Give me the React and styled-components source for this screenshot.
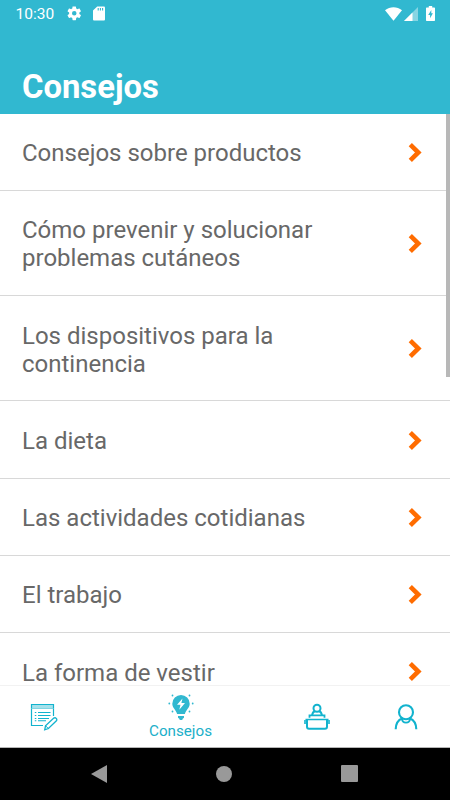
/**
 * External dependencies
 */
import styled, { createGlobalStyle, css } from 'styled-components';

const TEAL = '#31b8d0';
const TEAL_STROKE = '#12b3ce';
const ORANGE = '#ff6c00';

const GlobalStyle = createGlobalStyle`
  *, *::before, *::after {
    box-sizing: border-box;
  }

  body {
    margin: 0;
    font-family: Roboto, 'Liberation Sans', sans-serif;
    background-color: #fff;
  }
`;

const Screen = styled.div`
  position: relative;
  display: flex;
  flex-direction: column;
  width: 450px;
  height: 800px;
  overflow: hidden;
`;

const Header = styled.header`
  display: flex;
  flex-direction: column;
  flex: none;
  height: 113.5px;
  background-color: ${TEAL};
  color: #fff;
`;

const StatusBar = styled.div`
  display: flex;
  align-items: center;
  height: 27px;
  padding: 0 15.5px;
`;

const Clock = styled.span`
  width: 50.5px;
  padding-top: 1px;
  font-size: 15.5px;
  line-height: 27px;
`;

const StatusGroup = styled.div`
  display: flex;
  align-items: center;
  gap: ${({ $gap }) => $gap}px;
  ${({ $end }) =>
    $end &&
    css`
      margin-left: auto;
    `}
`;

const Title = styled.h1`
  margin: 41px 0 0 22px;
  font-size: 32.8px;
  line-height: 38px;
  font-weight: 700;
`;

const List = styled.ul`
  position: relative;
  flex: 1;
  min-height: 0;
  margin: 0;
  padding: 0;
  overflow: hidden;
  list-style: none;
`;

const Row = styled.li`
  display: flex;
  align-items: center;
  justify-content: space-between;
  padding: 25px 27px 23.05px 22px;
  border-bottom: 1px solid #d8d8d8;
`;

const Label = styled.span`
  width: 330px;
  padding-top: 0.5px;
  margin-bottom: -0.5px;
  font-size: 24px;
  line-height: 28.15px;
  color: #686868;
`;

const ScrollThumb = styled.div`
  position: absolute;
  top: 0;
  right: 0;
  width: 4.5px;
  height: 263px;
  background-color: #b8b8b8;
`;

const TabBar = styled.nav`
  display: flex;
  flex: none;
  height: 62.5px;
  border-top: 1px solid #f2f2f2;
  border-bottom: 1px solid #b5b5b5;
  background-color: #fff;
`;

const Tab = styled.div`
  display: flex;
  flex-direction: column;
  align-items: center;
  justify-content: center;
  width: ${({ $width }) => $width}px;
  padding-top: 1px;
  color: ${TEAL_STROKE};

  svg {
    flex: none;
  }
`;

const TabLabel = styled.span`
  padding-top: 1px;
  font-size: 15.2px;
  line-height: 18px;
  color: #20afc9;
`;

const SystemBar = styled.div`
  display: flex;
  align-items: center;
  justify-content: space-between;
  flex: none;
  height: 52.5px;
  padding: 0 92px 0 91px;
  background-color: #000;
`;

function GearIcon() {
  return (
    <svg width="16.5" height="16.5" viewBox="0 0 24 24" fill="#fff">
      <path d="M19.4 13a7.500 7.500 0 0 0 0-2l2.100-1.650c.2-.15.25-.42.12-.64l-2-3.460a.5.5 0 0 0-.6-.22l-2.500 1a7.300 7.300 0 0 0-1.700-.98l-.38-2.650A.49.49 0 0 0 14 2h-4a.49.49 0 0 0-.49.42l-.38 2.650c-.6.250-1.170.590-1.690.980l-2.490-1a.5.5 0 0 0-.61.22l-2 3.460c-.13.220-.07.490.12.640L4.570 11a7.900 7.900 0 0 0 0 2l-2.110 1.650a.5.5 0 0 0-.12.640l2 3.460c.12.220.39.300.61.220l2.490-1c.52.400 1.080.730 1.690.980l.38 2.650c.03.240.240.400.490.400h4c.25 0 .46-.18.490-.42l.38-2.650a7.700 7.700 0 0 0 1.690-.98l2.490 1c.23.090.490 0 .61-.22l2-3.460a.5.5 0 0 0-.12-.640zM12 15.300a3.300 3.300 0 1 1 0-6.600 3.300 3.300 0 0 1 0 6.600z" />
    </svg>
  );
}

function SdCardIcon() {
  return (
    <svg width="12" height="15" viewBox="0 0 12 15">
      <path d="M4.200.5H11a1 1 0 0 1 1 1v12a1 1 0 0 1-1 1H1a1 1 0 0 1-1-1v-9z" fill="#fff" />
      <path d="M5.200 2v2.500M7.400 2v2.500M9.600 2v2.500" stroke={TEAL} strokeWidth="1.100" />
    </svg>
  );
}

function WifiIcon() {
  return (
    <svg width="17" height="14" viewBox="0 0 17 14">
      <path d="M0 3.300C5-.7 12-.7 17 3.300L8.500 13.800z" fill="#fff" />
    </svg>
  );
}

function SignalIcon() {
  return (
    <svg width="14" height="14" viewBox="0 0 14 14">
      <path d="M0 14 14 0v14z" fill="#86d5e3" />
      <path d="M0 14 8.500 5.500V14z" fill="#fff" />
    </svg>
  );
}

function BatteryIcon() {
  return (
    <svg width="9" height="15" viewBox="0 0 9 15">
      <path d="M2.800 0h3.400v1.500H8.300a.7.7 0 0 1 .7.7v12.100a.7.7 0 0 1-.7.700H.7a.7.7 0 0 1-.7-.7V2.200a.7.7 0 0 1 .7-.7h2.100z" fill="#fff" />
      <path d="M5.300 4 2.200 8.900h1.900v3.300l2.800-4.900H5.300z" fill={TEAL} />
    </svg>
  );
}

function ChevronIcon() {
  return (
    <svg width="16" height="22" viewBox="0 0 16 22">
      <path
        d="m3.300 2.700 8 7.800-8 7.800"
        fill="none"
        stroke={ORANGE}
        strokeWidth="4.600"
      />
    </svg>
  );
}

function DiaryIcon() {
  return (
    <svg width="28" height="28" viewBox="0 0 28 28" fill="none" stroke="currentColor">
      <path d="M1.500 3.500h22" stroke="#a5e1eb" strokeWidth="4" />
      <path d="M23.500 13V1.500h-22v21H13" strokeWidth="1.200" />
      <path d="M1.500 5.500h22" stroke="#7fd5e3" strokeWidth="1" />
      <path d="M8 9.500h12.500M8 12.500h12.500M8 15.500h11M8 17.800h8" strokeWidth="1.100" />
      <path d="M4.800 9.500h1.500M4.800 12.500h1.500M4.800 15.500h1.500M4.800 17.800h1.500" strokeWidth="1.100" />
      <path d="m14.700 26.800.8-4 8.300-7.700c1.800-1.200 3.800 1 2.600 2.700l-8 7.700z" strokeWidth="1.300" />
      <path d="m15.500 22.800 2.900 2.700" strokeWidth="1" />
    </svg>
  );
}

function BulbIcon() {
  return (
    <svg width="26" height="27" viewBox="0 0 26 27" fill={TEAL}>
      <path d="M13 1a8.700 8.700 0 0 1 8.700 8.700c0 4.300-3.700 5.900-4.800 10.300H9.100C8 15.600 4.300 14 4.300 9.700A8.700 8.700 0 0 1 13 1z" />
      <path d="M10 22h6v1.700l-1.300 1-.5 1.300h-2.400l-.5-1.300-1.300-1z" />
      <path d="M14.500 4.500 9 10.700h3.500l-1.200 5 5.700-6.600h-3.600z" fill="#fff" />
      <circle cx="4.500" cy="1.500" r=".9" />
      <circle cx="21.500" cy="1.500" r=".9" />
      <circle cx="1.300" cy="9.500" r=".9" />
      <circle cx="24.700" cy="9.500" r=".9" />
      <circle cx="4.500" cy="17.500" r=".9" />
      <circle cx="21.500" cy="17.500" r=".9" />
    </svg>
  );
}

function DeskIcon() {
  return (
    <svg width="26" height="28" viewBox="0 0 26 28" fill="none" stroke="currentColor" strokeWidth="2">
      <circle cx="13" cy="5.200" r="3.500" />
      <path d="M8.200 12c.2-2 1.400-3.500 2.800-4M17.800 12c-.2-2-1.400-3.500-2.800-4" />
      <path d="M5.500 14.700v-2.400h15v2.400" strokeWidth="1.800" />
      <path d="M1.500 16.500h23M1 17v4M25 17v4" strokeWidth="1.600" />
      <path d="M3 16.500v7.200q0 2 2 2h16q2 0 2-2v-7.200" />
    </svg>
  );
}

function ProfileIcon() {
  return (
    <svg width="24" height="28" viewBox="0 0 24 28" fill="none" stroke="currentColor" strokeWidth="2.100">
      <circle cx="12" cy="9.200" r="7" />
      <path d="M1.700 26.200c.2-5.200 2.800-9.300 6.500-10.600M22.300 26.200c-.2-5.200-2.800-9.300-6.500-10.600" />
      <path d="M8 15.700c.2 5.200 7.800 5.200 8 0" strokeWidth="1.800" />
    </svg>
  );
}

const TIPS = [
  'Consejos sobre productos',
  'Cómo prevenir y solucionar problemas cutáneos',
  'Los dispositivos para la continencia',
  'La dieta',
  'Las actividades cotidianas',
  'El trabajo',
  'La forma de vestir',
];

export default function App() {
  return (
    <>
      <GlobalStyle />
      <Screen>
        <Header>
          <StatusBar>
            <Clock>{'10:30'}</Clock>
            <StatusGroup $gap={10}>
              <GearIcon />
              <SdCardIcon />
            </StatusGroup>
            <StatusGroup $gap={7.5} $end>
              <StatusGroup $gap={2}>
                <WifiIcon />
                <SignalIcon />
              </StatusGroup>
              <BatteryIcon />
            </StatusGroup>
          </StatusBar>
          <Title>{'Consejos'}</Title>
        </Header>
        <List>
          {TIPS.map((tip) => (
            <Row key={tip}>
              <Label>{tip}</Label>
              <ChevronIcon />
            </Row>
          ))}
          <ScrollThumb />
        </List>
        <TabBar>
          <Tab $width={88}>
            <DiaryIcon />
          </Tab>
          <Tab $width={185}>
            <BulbIcon />
            <TabLabel>{'Consejos'}</TabLabel>
          </Tab>
          <Tab $width={88}>
            <DeskIcon />
          </Tab>
          <Tab $width={89}>
            <ProfileIcon />
          </Tab>
        </TabBar>
        <SystemBar>
          <svg width="16" height="18" viewBox="0 0 16 18" fill="#999">
            <path d="M0 9 16 0v18z" />
          </svg>
          <svg width="16" height="16" viewBox="0 0 16 16" fill="#999">
            <circle cx="8" cy="8" r="8" />
          </svg>
          <svg width="17" height="17" viewBox="0 0 17 17" fill="#999">
            <rect width="17" height="17" rx="1" />
          </svg>
        </SystemBar>
      </Screen>
    </>
  );
}
